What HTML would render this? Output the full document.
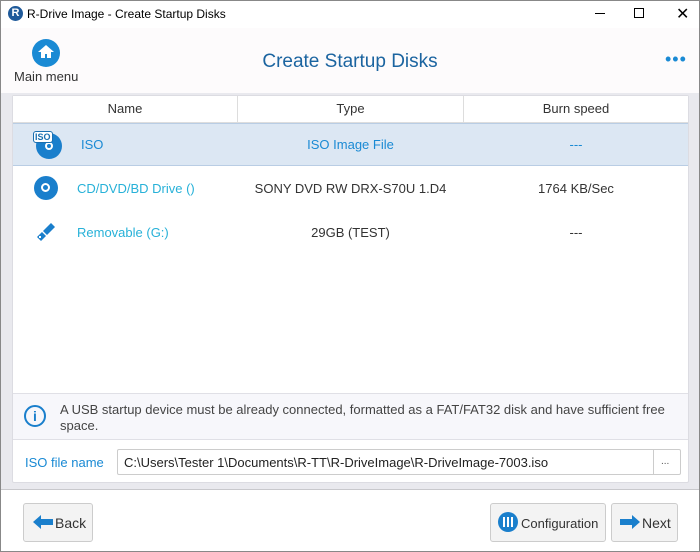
<!DOCTYPE html>
<html><head><meta charset="utf-8"><style>
*{box-sizing:border-box;margin:0;padding:0}
body{width:700px;height:552px;overflow:hidden;font-family:"Liberation Sans",sans-serif;background:#fff;position:relative;font-size:13px;color:#333}
.abs{position:absolute}
.win{position:absolute;left:0;top:0;width:700px;height:552px;border:1px solid #888}
</style></head><body>
<div class="win"></div>
<div class="abs" style="left:1px;top:1px;width:698px;height:27px;background:#fff"></div>
<div class="abs" style="left:8px;top:6px;width:15px;height:15px;border-radius:50%;background:#1f5a9a;color:#fff;font-size:11px;font-weight:bold;text-align:center;line-height:15px">R</div>
<div class="abs" style="left:27px;top:7px;font-size:12px;color:#000">R-Drive Image - Create Startup Disks</div>
<div class="abs" style="left:595px;top:13px;width:10px;height:1px;background:#000"></div>
<div class="abs" style="left:634px;top:8px;width:10px;height:10px;border:1px solid #000"></div>
<div class="abs" style="left:676px;top:4px;font-size:16px;color:#000">✕</div>
<div class="abs" style="left:1px;top:28px;width:698px;height:65px;background:#fdfbfc"></div>
<div class="abs" style="left:32px;top:39px;width:28px;height:28px;border-radius:50%;background:#1a8ad4"></div>
<svg class="abs" style="left:36px;top:42px" width="20" height="20" viewBox="0 0 20 20"><path d="M10 3L2 10h3v6h4v-4h2v4h4v-6h3z" fill="#fff"/></svg>
<div class="abs" style="left:14px;top:69px;font-size:13px;color:#333">Main menu</div>
<div class="abs" style="left:0;top:51px;width:700px;text-align:center;font-size:19px;color:#1b64a0">Create Startup Disks</div>
<div class="abs" style="left:665px;top:52px;font-size:18px;color:#1a8ad4;letter-spacing:1px;line-height:14px">•••</div>
<div class="abs" style="left:1px;top:93px;width:698px;height:397px;background:#e9e9ee;border-bottom:1px solid #c8c8cc"></div>
<div class="abs" style="left:12px;top:95px;width:677px;height:388px;background:#fff;border:1px solid #dcdce2;border-radius:2px"></div>
<div class="abs" style="left:13px;top:96px;width:675px;height:27px;background:#fff;border-bottom:1px solid #ddd"></div>
<div class="abs" style="left:237px;top:96px;width:1px;height:26px;background:#ddd"></div>
<div class="abs" style="left:463px;top:96px;width:1px;height:26px;background:#ddd"></div>
<div class="abs" style="left:13px;top:101px;width:224px;text-align:center;color:#333">Name</div>
<div class="abs" style="left:238px;top:101px;width:225px;text-align:center;color:#333">Type</div>
<div class="abs" style="left:464px;top:101px;width:224px;text-align:center;color:#333">Burn speed</div>
<div class="abs" style="left:13px;top:123px;width:675px;height:43px;background:#dce7f3;border-top:1px solid #b9cde4;border-bottom:1px solid #b9cde4"></div>
<div class="abs" style="left:36px;top:133px;width:26px;height:26px;border-radius:50%;background:#1a7fcc"></div>
<div class="abs" style="left:45px;top:142px;width:8px;height:8px;border-radius:50%;border:2px solid #fff"></div>
<div class="abs" style="left:33px;top:131px;font-size:9px;font-weight:bold;color:#1a6fb0;background:#fff;border:1px solid #1a6fb0;border-radius:3px;padding:0 1px;line-height:10px">ISO</div>
<div class="abs" style="left:81px;top:137px;color:#1a8ad4">ISO</div>
<div class="abs" style="left:238px;top:137px;width:225px;text-align:center;color:#1a8ad4">ISO Image File</div>
<div class="abs" style="left:464px;top:137px;width:224px;text-align:center;color:#1a8ad4">---</div>
<div class="abs" style="left:34px;top:176px;width:24px;height:24px;border-radius:50%;background:#1a7fcc"></div>
<div class="abs" style="left:41px;top:183px;width:9px;height:9px;border-radius:50%;border:2px solid #fff"></div>
<div class="abs" style="left:77px;top:181px;color:#27b1d8">CD/DVD/BD Drive ()</div>
<div class="abs" style="left:238px;top:181px;width:225px;text-align:center">SONY DVD RW DRX-S70U 1.D4</div>
<div class="abs" style="left:464px;top:181px;width:224px;text-align:center">1764 KB/Sec</div>
<svg class="abs" style="left:34px;top:220px" width="24" height="24" viewBox="0 0 24 24"><path d="M9 11l8-8 4 4-8 8z" fill="#1a7fcc"/><path d="M3 17l5-5 4 4-5 5z" fill="#1a7fcc"/><rect x="5" y="16" width="2" height="2" fill="#fff"/></svg>
<div class="abs" style="left:77px;top:225px;color:#27b1d8">Removable (G:)</div>
<div class="abs" style="left:238px;top:225px;width:225px;text-align:center">29GB (TEST)</div>
<div class="abs" style="left:464px;top:225px;width:224px;text-align:center">---</div>
<div class="abs" style="left:13px;top:393px;width:675px;height:47px;background:#f7f7fb;border-top:1px solid #e0e0e6;border-bottom:1px solid #e0e0e6"></div>
<div class="abs" style="left:24px;top:405px;width:22px;height:22px;border-radius:50%;border:2px solid #1a7fcc;color:#1a7fcc;text-align:center;font-weight:bold;font-size:14px;line-height:18px">i</div>
<div class="abs" style="left:60px;top:402px;width:610px;font-size:13px;line-height:16px;color:#444">A USB startup device must be already connected, formatted as a FAT/FAT32 disk and have sufficient free space.</div>
<div class="abs" style="left:25px;top:455px;color:#1a8ad4">ISO file name</div>
<div class="abs" style="left:117px;top:449px;width:564px;height:26px;border:1px solid #ccc;border-radius:2px;background:#fff"></div>
<div class="abs" style="left:653px;top:450px;width:1px;height:24px;background:#ccc"></div>
<div class="abs" style="left:124px;top:455px;color:#222">C:\Users\Tester 1\Documents\R-TT\R-DriveImage\R-DriveImage-7003.iso</div>
<div class="abs" style="left:661px;top:456px;font-size:10px;color:#555">...</div>
<div class="abs" style="left:23px;top:503px;width:70px;height:39px;border:1px solid #ccc;border-radius:3px;background:#f3f3f3"></div>
<svg class="abs" style="left:33px;top:514px" width="20" height="16" viewBox="0 0 20 16"><path d="M0 8L8 1v4h12v6H8v4z" fill="#1a7fcc"/></svg>
<div class="abs" style="left:55px;top:515px;font-size:14px;color:#333">Back</div>
<div class="abs" style="left:490px;top:503px;width:116px;height:39px;border:1px solid #ccc;border-radius:3px;background:#f3f3f3"></div>
<div class="abs" style="left:498px;top:512px;width:20px;height:20px;border-radius:50%;background:#1a7fcc"></div>
<div class="abs" style="left:503px;top:517px;width:2px;height:10px;background:#fff"></div>
<div class="abs" style="left:507px;top:517px;width:2px;height:10px;background:#fff"></div>
<div class="abs" style="left:511px;top:517px;width:2px;height:10px;background:#fff"></div>
<div class="abs" style="left:521px;top:516px;font-size:13px;color:#333">Configuration</div>
<div class="abs" style="left:611px;top:503px;width:67px;height:39px;border:1px solid #ccc;border-radius:3px;background:#f3f3f3"></div>
<svg class="abs" style="left:620px;top:514px" width="20" height="16" viewBox="0 0 20 16"><path d="M20 8L12 1v4H0v6h12v4z" fill="#1a7fcc"/></svg>
<div class="abs" style="left:642px;top:515px;font-size:14px;color:#333">Next</div>
</body></html>
